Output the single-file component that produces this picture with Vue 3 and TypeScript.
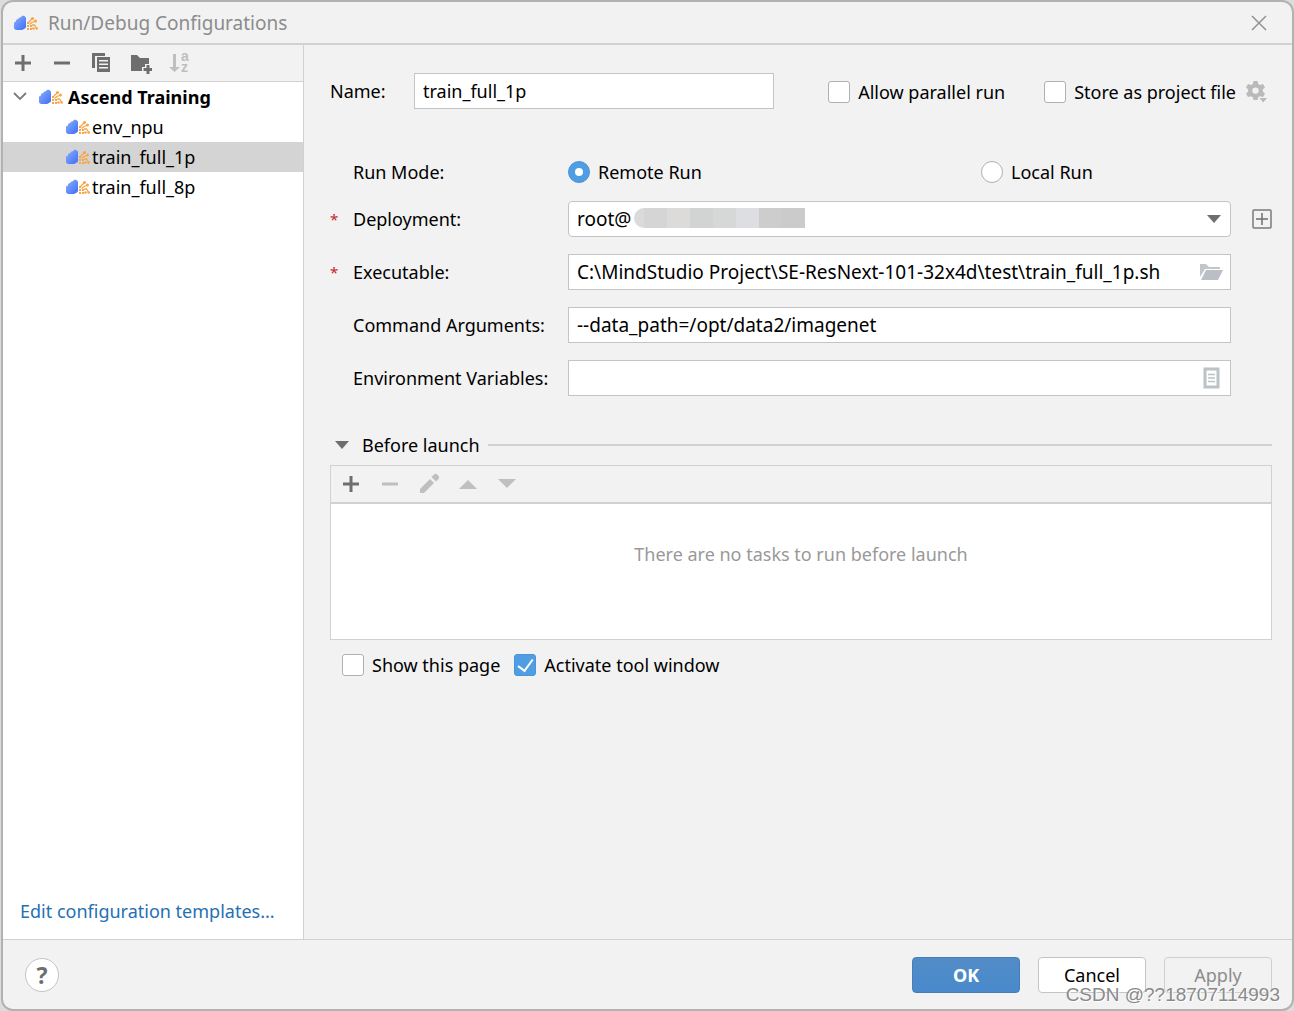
<script setup lang="ts">
import { ref } from 'vue'

interface Config {
  id: string
  label: string
}

const configs: Config[] = [
  { id: 'env', label: 'env_npu' },
  { id: 'full1', label: 'train_full_1p' },
  { id: 'full8', label: 'train_full_8p' },
]

const selected = ref('full1')
const name = ref('train_full_1p')
const allowParallel = ref(false)
const storeAsFile = ref(false)
const runMode = ref('remote')
const deployment = ref('root')
const executable = ref('C:\\MindStudio Project\\SE-ResNext-101-32x4d\\test\\train_full_1p.sh')
const commandArgs = ref('--data_path=/opt/data2/imagenet')
const envVars = ref('')
const showPage = ref(false)
const activateWindow = ref(true)

const maskColors = ['#d9dadc', '#d5d5d5', '#dcdbda', '#d2d4d3', '#d6d7d7', '#dddee1', '#cdcdcd', '#cbcbcb']
</script>

<template>
  <div class="desktop">
    <svg class="defs" aria-hidden="true">
      <defs>
        <linearGradient id="logoBlue" x1="0" y1="0" x2="1" y2="1">
          <stop offset="0" stop-color="#8fb0fb" />
          <stop offset="1" stop-color="#3c6df8" />
        </linearGradient>
        <symbol id="logo" viewBox="0 0 24 16">
          <path d="M0 8.500C0 7.300 .8 6.500 2 6.500C1.800 5 2.800 3.900 4.300 4C4.500 2.700 5.600 1.900 7 2.200C7.600 1 9 .5 10.200 1C11.400 1.500 12 2.300 12 3.400V11.500C12 12.800 11.400 13.500 10.200 13.800C9.300 14.800 8.200 15 7 15H2.500C1 15 0 14 0 12.800Z" fill="url(#logoBlue)" />
          <g fill="#f8a548">
            <rect x="13" y="7" width="2" height="2" /><rect x="13" y="10" width="2" height="2" /><rect x="13" y="13" width="2" height="2" />
            <rect x="16" y="10" width="2" height="2" /><rect x="16" y="13" width="2" height="2" />
            <circle cx="18.500" cy="3.500" r="1.500" /><circle cx="21.500" cy="6" r="1.500" /><circle cx="19.500" cy="13.500" r="1.300" /><circle cx="22.700" cy="13.500" r="1.300" />
          </g>
          <path d="M14.500 7.500L18.500 3.500M15.500 9.500L18 7.500L21.500 6M18 10H20.500L22.500 13" fill="none" stroke="#f8a548" stroke-width="1.300" />
        </symbol>
        <symbol id="plus" viewBox="0 0 24 24"><path d="M12 4V20M4 12H20" stroke="currentColor" stroke-width="3" /></symbol>
        <symbol id="minus" viewBox="0 0 24 24"><path d="M4 12H20" stroke="currentColor" stroke-width="3" /></symbol>
      </defs>
    </svg>

    <div class="dialog" role="dialog" aria-labelledby="dialogTitle">
      <header class="titlebar">
        <svg class="logo"><use href="#logo" /></svg>
        <h1 id="dialogTitle">Run/Debug Configurations</h1>
        <button class="close" type="button" aria-label="Close">
          <svg viewBox="0 0 16 16"><path d="M1 1L15 15M15 1L1 15" stroke="#929292" stroke-width="1.500" fill="none" /></svg>
        </button>
      </header>

      <div class="body">
        <aside class="sidebar">
          <div class="tools side-tools">
            <button type="button" aria-label="Add"><svg><use href="#plus" /></svg></button>
            <button type="button" aria-label="Remove"><svg><use href="#minus" /></svg></button>
            <button type="button" aria-label="Copy">
              <svg viewBox="0 0 24 24">
                <path d="M3 2H16V5H6V17H3Z" fill="currentColor" />
                <path fill-rule="evenodd" d="M8 6H21V21H8ZM10 9V10.500H19V9ZM10 12.500V14H19V12.500ZM10 16V17.500H19V16Z" fill="currentColor" />
              </svg>
            </button>
            <button type="button" aria-label="New folder">
              <svg viewBox="0 0 24 24">
                <path d="M3 4H9L12 7H21V13H17V16H14V20H3Z" fill="currentColor" />
                <path d="M20 14V23M15.500 18.500H24" stroke="currentColor" stroke-width="3" />
              </svg>
            </button>
            <button type="button" aria-label="Sort" disabled>
              <svg class="sort" viewBox="0 0 24 24">
                <path d="M6 3H9V16H13L7.500 21L2 16H6Z" fill="currentColor" />
                <text x="14" y="10" class="az">a</text>
                <text x="14" y="21" class="az">z</text>
              </svg>
            </button>
          </div>

          <ul class="tree">
            <li class="node root">
              <svg class="chevron" viewBox="0 0 14 14"><path d="M1 3L7 9L13 3" fill="none" stroke="#7c7c7c" stroke-width="1.800" /></svg>
              <svg class="logo"><use href="#logo" /></svg>
              <span>Ascend Training</span>
            </li>
            <li
              v-for="c in configs"
              :key="c.id"
              class="node leaf"
              :class="{ selected: c.id === selected }"
              @click="selected = c.id"
            >
              <svg class="logo"><use href="#logo" /></svg>
              <span>{{ c.label }}</span>
            </li>
          </ul>

          <a class="templates" href="#">Edit configuration templates...</a>
        </aside>

        <main class="main">
          <div class="name-row">
            <label class="name-label" for="cfgName">Name:</label>
            <input id="cfgName" v-model="name" class="field name-field" type="text" />
            <div class="name-options">
              <label class="check"><input v-model="allowParallel" type="checkbox" /><span>Allow parallel run</span></label>
              <label class="check"><input v-model="storeAsFile" type="checkbox" /><span>Store as project file</span></label>
              <button class="gear" type="button" aria-label="Storage options">
                <svg viewBox="0 0 22 22">
                  <path fill-rule="evenodd" fill="#bababa" d="M7.500 0H11.500L12.200 3L14 4L17 3L19 6.500L16.800 8.600V10.600L19 12.700L17 16L14 15.200L12.200 16.200L11.500 19H7.500L6.800 16.200L5 15.200L2 16L0 12.700L2.200 10.600V8.600L0 6.500L2 3L5 4L6.800 3ZM9.500 6.400A3.200 3.200 0 1 0 9.500 12.800A3.200 3.200 0 1 0 9.500 6.400Z" />
                  <path d="M12.500 16.500H22L17.200 22Z" fill="#bababa" stroke="#f2f2f2" />
                </svg>
              </button>
            </div>
          </div>

          <div class="form">
            <span class="label">Run Mode:</span>
            <div class="modes" role="radiogroup" aria-label="Run Mode">
              <label class="check"><input v-model="runMode" type="radio" name="mode" value="remote" /><span>Remote Run</span></label>
              <label class="check"><input v-model="runMode" type="radio" name="mode" value="local" /><span>Local Run</span></label>
            </div>

            <span class="star">*</span>
            <label class="label" for="deploy">Deployment:</label>
            <div class="control">
              <select id="deploy" v-model="deployment" class="field combo">
                <option value="root">root@</option>
              </select>
              <div class="mask" aria-hidden="true">
                <i v-for="(color, i) in maskColors" :key="i" :style="{ background: color }"></i>
              </div>
              <svg class="arrow" viewBox="0 0 14 8"><path d="M0 0H14L7 8Z" fill="#6e6e6e" /></svg>
            </div>
            <button class="add-deploy" type="button" aria-label="Add deployment">
              <svg viewBox="0 0 20 20"><rect x="1" y="1" width="18" height="18" rx="1" fill="none" stroke="#7a7a7a" stroke-width="1.500" /><path d="M10 4V16M4 10H16" stroke="#6e6e6e" stroke-width="1.500" /></svg>
            </button>

            <span class="star">*</span>
            <label class="label" for="exec">Executable:</label>
            <div class="control">
              <input id="exec" v-model="executable" class="field" type="text" />
              <button class="inner-icon" type="button" aria-label="Browse">
                <svg viewBox="0 0 24 24"><path d="M0 4H6L9 7H20V9H5L0 17Z" fill="#c1c6ca" /><path d="M6 10H23L18 20H1Z" fill="#b9bfc4" /></svg>
              </button>
            </div>

            <label class="label" for="args">Command Arguments:</label>
            <div class="control"><input id="args" v-model="commandArgs" class="field" type="text" /></div>

            <label class="label" for="env">Environment Variables:</label>
            <div class="control">
              <input id="env" v-model="envVars" class="field" type="text" />
              <button class="inner-icon" type="button" aria-label="Edit variables">
                <svg viewBox="0 0 24 24"><rect x="5" y="3" width="13" height="18" fill="none" stroke="#bcc2c6" stroke-width="3" /><path d="M8 8.500H15M8 12H15M8 15.500H15" stroke="#bcc2c6" stroke-width="1.500" /></svg>
              </button>
            </div>
          </div>

          <section class="before">
            <button class="section-head" type="button">
              <svg viewBox="0 0 14 8"><path d="M0 0H14L7 8Z" fill="#6e6e6e" /></svg>
              <span>Before launch</span>
            </button>
            <div class="tasks">
              <div class="tools task-tools">
                <button type="button" aria-label="Add task"><svg><use href="#plus" /></svg></button>
                <button type="button" aria-label="Remove task" disabled><svg><use href="#minus" /></svg></button>
                <button type="button" aria-label="Edit task" disabled>
                  <svg viewBox="0 0 24 24"><path d="M3 17L13 7L17 11L7 21H3Z" fill="currentColor" /><path d="M14.500 5L17 2.500Q18.500 1 20 2.500L21.500 4Q23 5.500 21.500 7L19 9.500Z" fill="currentColor" /></svg>
                </button>
                <button type="button" aria-label="Move up" disabled><svg viewBox="0 0 24 24"><path d="M3 17H21L12 8Z" fill="currentColor" /></svg></button>
                <button type="button" aria-label="Move down" disabled><svg viewBox="0 0 24 24"><path d="M3 7H21L12 16Z" fill="currentColor" /></svg></button>
              </div>
              <p class="empty">There are no tasks to run before launch</p>
            </div>
            <div class="launch-options">
              <label class="check"><input v-model="showPage" type="checkbox" /><span>Show this page</span></label>
              <label class="check"><input v-model="activateWindow" type="checkbox" /><span>Activate tool window</span></label>
            </div>
          </section>
        </main>
      </div>

      <footer class="footer">
        <button class="help" type="button" aria-label="Help">?</button>
        <div class="actions">
          <button class="btn primary" type="button">OK</button>
          <button class="btn" type="button">Cancel</button>
          <button class="btn" type="button" disabled>Apply</button>
        </div>
      </footer>
    </div>
    <div class="watermark">CSDN @??18707114993</div>
  </div>
</template>

<style>
body {
  margin: 0;
}
</style>

<style scoped>
* {
  box-sizing: border-box;
}

.desktop {
  position: relative;
  display: flex;
  min-height: 100vh;
  padding-left: 1px;
  background: #dcdcdc;
  color: #000;
  font: 18px/24px "Noto Sans", "Open Sans", sans-serif;
}

.defs {
  position: absolute;
  width: 0;
  height: 0;
}

.dialog {
  display: flex;
  flex: 1;
  flex-direction: column;
  min-width: 0;
  border: 2px solid #b2b2b2;
  border-radius: 12px;
  background: #f2f2f2;
  overflow: hidden;
}

button {
  padding: 0;
  border: 0;
  background: none;
  color: inherit;
  font: inherit;
}

svg {
  display: block;
}

.logo {
  flex: none;
  width: 24px;
  height: 16px;
}

.titlebar {
  display: flex;
  align-items: center;
  height: 43px;
  padding: 0 25px 0 11px;
  border-bottom: 2px solid #d1d1d1;
}

h1 {
  flex: 1;
  margin: 0 0 0 10px;
  color: #8c8c8c;
  font-size: 19px;
  font-weight: 400;
}

.close svg {
  width: 16px;
  height: 16px;
}

.body {
  display: flex;
  flex: 1;
}

.sidebar {
  display: flex;
  flex: none;
  flex-direction: column;
  width: 301px;
  border-right: 1px solid #d1d1d1;
  background: #fff;
}

.tools {
  display: flex;
  align-items: center;
  gap: 15px;
  height: 37px;
  padding-left: 8px;
  border-bottom: 1px solid #d1d1d1;
  background: #f2f2f2;
  color: #6e6e6e;
}

.tools svg {
  width: 24px;
  height: 24px;
}

.tools button:disabled {
  color: #bfbfbf;
}

.tools .sort {
  overflow: visible;
}

.az {
  fill: currentColor;
  font: bold 14px "Liberation Sans", Arial, sans-serif;
}

.tree {
  flex: 1;
  margin: 0;
  padding: 0;
  list-style: none;
}

.node {
  display: flex;
  align-items: center;
  height: 30px;
}

.root {
  gap: 5px;
  padding-left: 10px;
  font-weight: 700;
}

.chevron {
  width: 14px;
  height: 14px;
  margin-right: 7px;
}

.leaf {
  gap: 2px;
  padding-left: 63px;
}

.selected {
  background: #d4d4d4;
}

.templates {
  padding: 0 17px 16px;
  color: #2470b3;
  text-decoration: none;
  white-space: nowrap;
}

.main {
  flex: 1;
  min-width: 0;
  padding: 28px 20px 0 26px;
}

.name-row {
  display: flex;
  align-items: center;
}

.name-label {
  width: 84px;
}

.field {
  display: block;
  width: 100%;
  height: 36px;
  padding: 0 8px;
  border: 1px solid #c4c4c4;
  outline: 0;
  background: #fff;
  color: #000;
  font: inherit;
}

.name-field {
  width: 360px;
}

.name-options {
  display: flex;
  flex: 1;
  align-items: center;
  justify-content: flex-end;
  padding-top: 2px;
}

.name-options .check {
  margin-right: 39px;
}

.name-options .check + .check {
  margin-right: 10px;
}

.check {
  display: flex;
  align-items: center;
  gap: 8px;
  white-space: nowrap;
}

.check input {
  display: grid;
  place-items: center;
  width: 22px;
  height: 22px;
  margin: 0;
  border: 1px solid #b0b0b0;
  border-radius: 3px;
  appearance: none;
  background: #fff;
}

.check input[type="radio"] {
  border-radius: 50%;
}

.check input:checked {
  border-color: #4a94da;
  background: #4f9ee3;
}

.check input[type="radio"]:checked::before {
  width: 8px;
  height: 8px;
  border-radius: 50%;
  background: #fff;
  content: "";
}

.check input[type="checkbox"]:checked::before {
  width: 7px;
  height: 13px;
  margin-bottom: 3px;
  border: solid #fff;
  border-width: 0 2px 2px 0;
  content: "";
  transform: rotate(36deg);
}

.gear {
  margin-right: 4px;
}

.gear svg {
  width: 22px;
  height: 22px;
}

.form {
  display: grid;
  grid-template-columns: 23px 215px 1fr 41px;
  row-gap: 17px;
  align-items: center;
  margin-top: 51px;
}

.star {
  grid-column: 1;
  color: #c7222d;
  font-size: 15px;
}

.label {
  grid-column: 2;
  white-space: nowrap;
}

.modes {
  display: grid;
  grid-column: 3 / 5;
  grid-template-columns: 413px 1fr;
}

.control {
  position: relative;
  grid-column: 3;
}

.control .field {
  font-size: 19px;
}

.combo {
  border-radius: 4px;
  appearance: none;
}

.mask {
  position: absolute;
  top: 7px;
  left: 66px;
  display: flex;
  width: 171px;
  height: 20px;
  border-radius: 10px 0 0 10px;
  overflow: hidden;
}

.mask i {
  width: 23px;
}

.mask i:first-child {
  flex: 1;
}

.arrow {
  position: absolute;
  top: 14px;
  right: 10px;
  width: 14px;
  height: 8px;
  pointer-events: none;
}

.inner-icon {
  position: absolute;
  top: 6px;
  right: 7px;
}

.inner-icon svg {
  width: 24px;
  height: 24px;
}

.add-deploy {
  justify-self: end;
}

.add-deploy svg {
  width: 20px;
  height: 20px;
}

.before {
  margin-top: 37px;
}

.section-head {
  display: flex;
  align-items: center;
  width: 100%;
  height: 24px;
  padding-left: 5px;
}

.section-head svg {
  width: 14px;
  height: 8px;
  margin-right: 13px;
}

.section-head::after {
  flex: 1;
  height: 2px;
  margin-left: 8px;
  background: #d1d1d1;
  content: "";
}

.tasks {
  height: 175px;
  margin-top: 8px;
  border: 1px solid #d1d1d1;
  background: #fff;
}

.task-tools {
  height: 38px;
  border-bottom-width: 2px;
}

.empty {
  margin: 38px 0 0;
  color: #999;
  text-align: center;
}

.launch-options {
  display: flex;
  gap: 14px;
  margin-top: 13px;
  padding-left: 12px;
}

.footer {
  display: flex;
  align-items: center;
  justify-content: space-between;
  height: 70px;
  padding: 0 20px 0 22px;
  border-top: 1px solid #d1d1d1;
}

.help {
  width: 34px;
  height: 34px;
  border: 1px solid #c4c4c4;
  border-radius: 50%;
  background: #fff;
  color: #6e6e6e;
  font-size: 23px;
  font-weight: 700;
}

.actions {
  display: flex;
  gap: 18px;
}

.btn {
  width: 108px;
  height: 36px;
  border: 1px solid #c4c4c4;
  border-radius: 4px;
  background: #fff;
}

.btn:disabled {
  border-color: #cfcfcf;
  background: #f2f2f2;
  color: #8c8c8c;
}

.primary {
  border-color: #487eb8;
  background: linear-gradient(#528cc7, #4989cc);
  color: #fff;
  font-weight: 700;
}

.watermark {
  position: absolute;
  right: 14px;
  bottom: 5px;
  color: #8a8a8a;
  font: 19px/22px "Liberation Sans", Arial, sans-serif;
  text-shadow: 1px 1px 0 #fff;
  pointer-events: none;
}
</style>
